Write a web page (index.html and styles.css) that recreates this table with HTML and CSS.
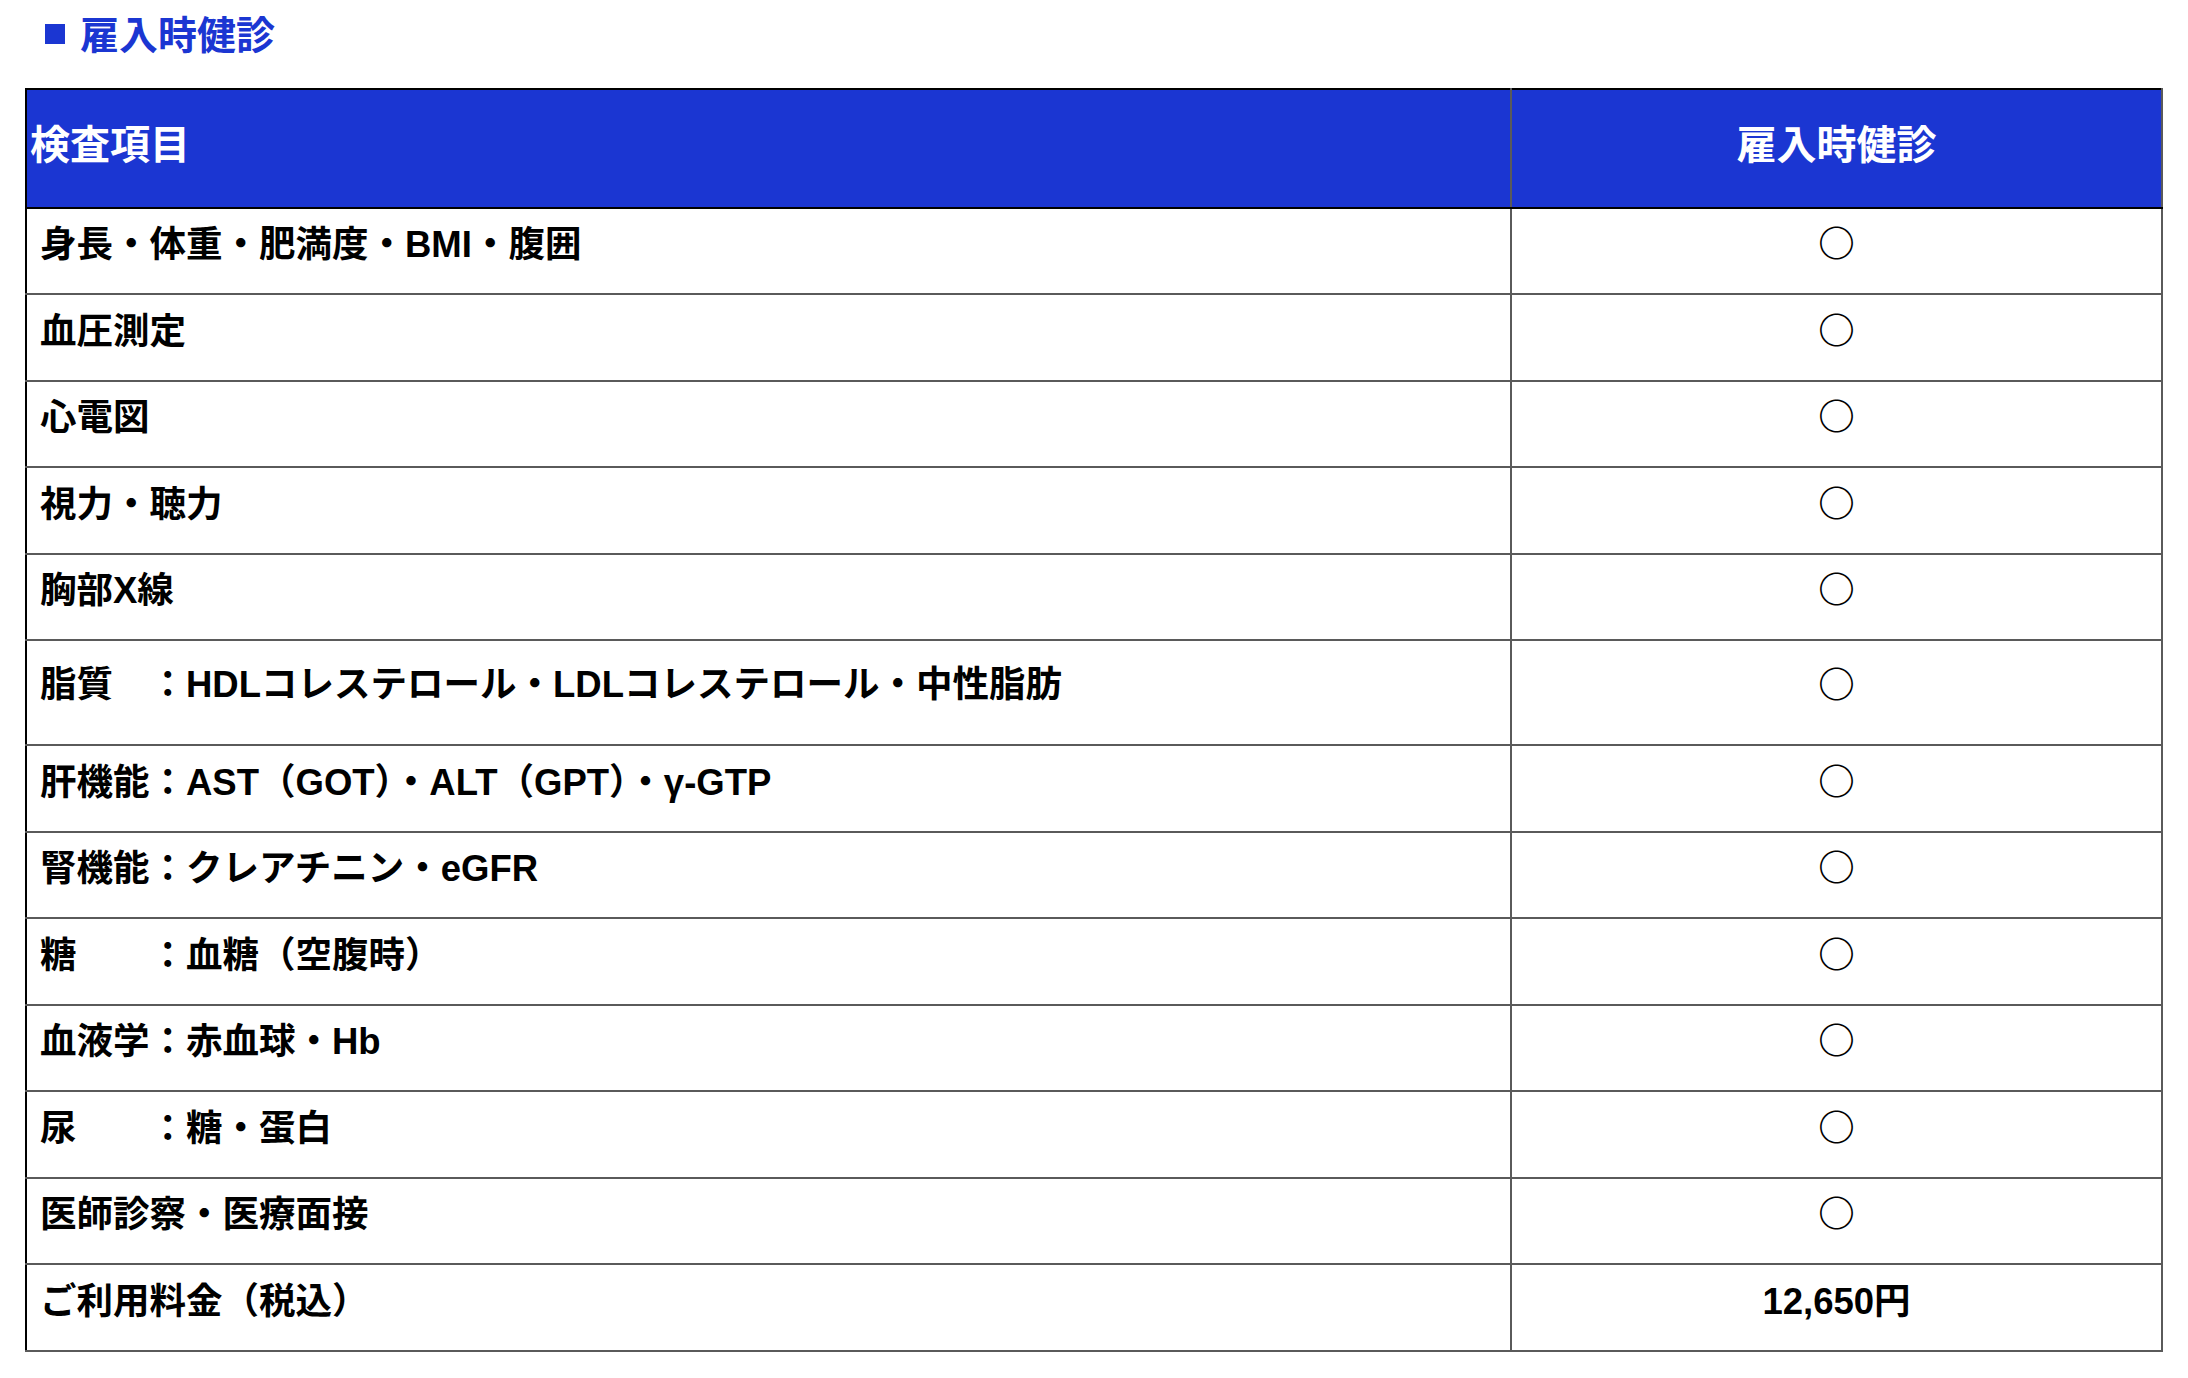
FILE: index.html
```html
<!DOCTYPE html>
<html lang="ja">
<head>
<meta charset="utf-8">
<title>雇入時健診</title>
<link rel="stylesheet" href="styles.css">
</head>
<body>
<main class="page">
  <h2 class="section-title"><span class="title-mark"></span><span class="title-text">雇入時健診</span></h2>
  <table class="exam-table">
    <colgroup>
      <col class="col-item">
      <col class="col-plan">
    </colgroup>
    <thead>
      <tr>
        <th class="head-item">検査項目</th>
        <th class="head-plan">雇入時健診</th>
      </tr>
    </thead>
    <tbody>
      <tr><td class="item">身長・体重・肥満度・BMI・腹囲</td><td class="mark">○</td></tr>
      <tr><td class="item">血圧測定</td><td class="mark">○</td></tr>
      <tr><td class="item">心電図</td><td class="mark">○</td></tr>
      <tr><td class="item">視力・聴力</td><td class="mark">○</td></tr>
      <tr><td class="item">胸部X線</td><td class="mark">○</td></tr>
      <tr class="tall"><td class="item">脂質　：HDLコレステロール・LDLコレステロール・中性脂肪</td><td class="mark">○</td></tr>
      <tr><td class="item">肝機能：AST（GOT）・ALT（GPT）・γ-GTP</td><td class="mark">○</td></tr>
      <tr><td class="item">腎機能：クレアチニン・eGFR</td><td class="mark">○</td></tr>
      <tr><td class="item">糖　　：血糖（空腹時）</td><td class="mark">○</td></tr>
      <tr><td class="item">血液学：赤血球・Hb</td><td class="mark">○</td></tr>
      <tr><td class="item">尿　　：糖・蛋白</td><td class="mark">○</td></tr>
      <tr><td class="item">医師診察・医療面接</td><td class="mark">○</td></tr>
      <tr><td class="item">ご利用料金（税込）</td><td class="price">12,650円</td></tr>
    </tbody>
  </table>
</main>
</body>
</html>
```
FILE: styles.css
```css
html, body {
  margin: 0;
  padding: 0;
  background: #ffffff;
}

body {
  font-family: "Noto Sans CJK JP", "Noto Sans", sans-serif;
  color: #000000;
}

.page {
  padding: 5px 25px 0 25px;
}

.section-title {
  display: flex;
  align-items: center;
  margin: 0 0 28px 0;
  padding-left: 20px;
  height: 55px;
  font-size: 39px;
  line-height: 55px;
  font-weight: 700;
  color: #1b36d2;
}

.title-mark {
  display: inline-block;
  width: 20px;
  height: 20px;
  background: #1b36d2;
  margin-right: 15px;
  margin-top: 2px;
}

.exam-table {
  width: 100%;
  border-collapse: collapse;
  table-layout: fixed;
}

.col-item {
  width: 1485px;
}

.exam-table th,
.exam-table td {
  border: 2px solid #5a5a5a;
  padding: 0;
}

.exam-table thead th {
  background: #1b36d2;
  color: #ffffff;
  font-size: 40px;
  font-weight: 700;
  line-height: 60px;
  padding-top: 21.5px;
  padding-bottom: 35px;
  border-top-color: #000000;
  border-bottom-color: #000000;
}

.exam-table .head-item {
  text-align: left;
  padding-left: 3px;
  border-left-color: #000000;
}

.exam-table .head-plan {
  text-align: center;
}

.exam-table td {
  font-family: "Liberation Sans", "Noto Sans CJK JP", sans-serif;
  font-size: 36.5px;
  font-weight: 700;
  line-height: 60px;
  padding-top: 6.5px;
  padding-bottom: 18px;
}

.exam-table td.item {
  padding-left: 13px;
  text-align: left;
  border-left-color: #000000;
  white-space: pre;
}

.exam-table tr.tall td {
  padding-top: 13.5px;
  padding-bottom: 29.5px;
}

.exam-table td.mark {
  font-family: "Noto Sans CJK JP", sans-serif;
  text-align: center;
  font-weight: 700;
  padding-top: 3.5px;
  padding-bottom: 21px;
}

.exam-table tr.tall td.mark {
  padding-top: 12px;
  padding-bottom: 31px;
}

.exam-table td.price {
  text-align: center;
}
```
